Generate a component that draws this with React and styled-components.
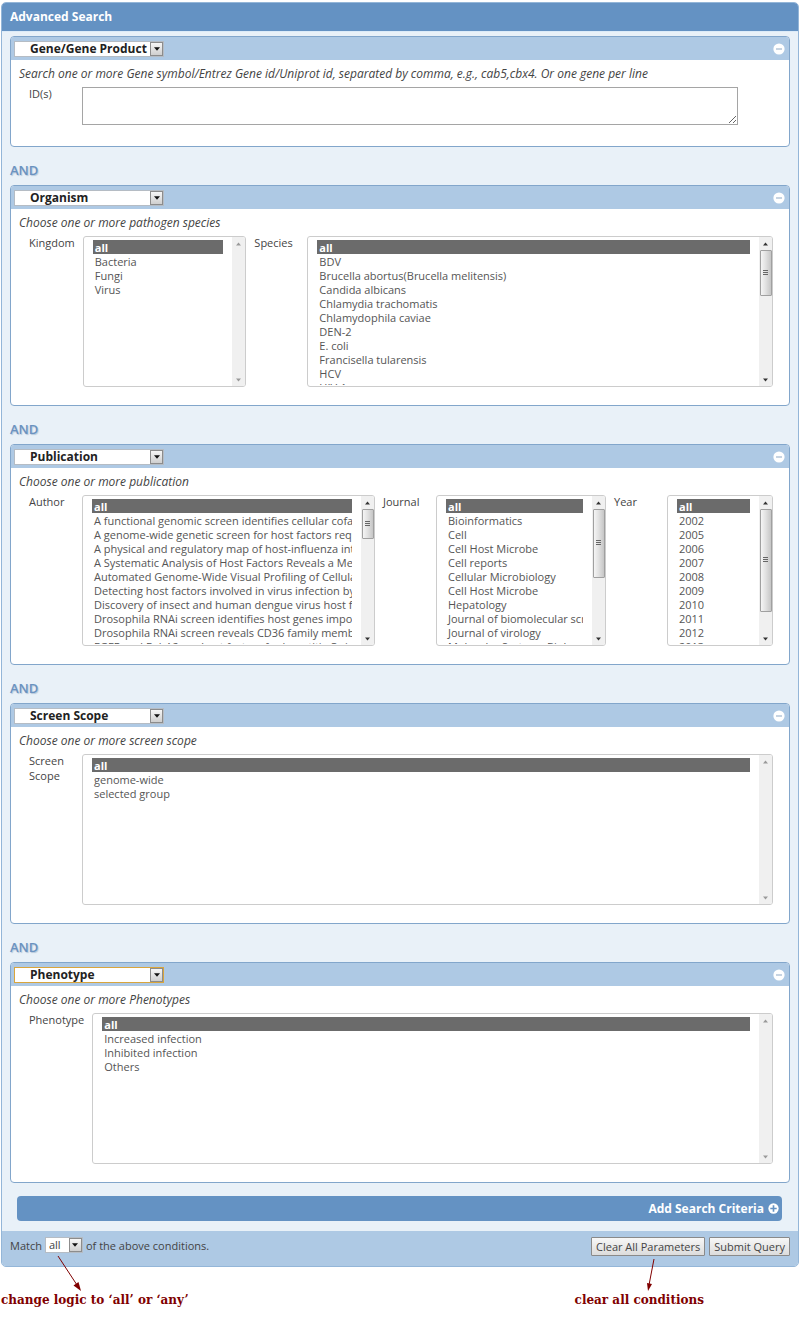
import React from 'react';
import styled, { createGlobalStyle, css } from 'styled-components';

const GlobalStyle = createGlobalStyle`
  * { box-sizing: border-box; }
  body {
    margin: 0;
    background: #fff;
    color: #444;
    font-family: "Open Sans", "Noto Sans", sans-serif;
    font-size: 11px;
    line-height: 15px;
  }
  button, select, textarea { font: inherit; color: inherit; margin: 0; }
`;

const Page = styled.main`
  padding: 2px 1px 0;
`;

const SearchForm = styled.form`
  border: 1px solid #94b6d8;
  border-radius: 5px;
  background: #e9f1f8;
  overflow: hidden;
`;

const Title = styled.h1`
  margin: 0;
  padding: 0 8px;
  font-size: 12px;
  line-height: 28px;
  color: #fff;
  background: #6492c3;
`;

const Body = styled.div`
  padding: 4px 8px 10px;
  border: solid #dcebf8;
  border-width: 1px 0 0;
`;

const Panel = styled.section`
  border: 1px solid #82a6cb;
  border-radius: 4px;
  background: #fff;
  overflow: hidden;
`;

const PanelHeader = styled.header`
  display: flex;
  align-items: center;
  justify-content: space-between;
  height: 23px;
  padding: 0 4px 0 3px;
  background: #aec9e4;
`;

const IconButton = styled.button`
  display: flex;
  padding: 0;
  border: 0;
  background: none;
`;

const SelectFrame = styled.span`
  position: relative;
  display: inline-flex;
  width: ${(p) => (p.$compact ? '38px' : '150px')};
  height: 16px;
  border: 1px solid ${(p) => (p.$active ? '#d9a53c' : '#b5bcc4')};
  background: #fff;
`;

const Dropdown = styled.select`
  appearance: none;
  width: 100%;
  padding: 0 13px 0 ${(p) => (p.$compact ? '3px' : '15px')};
  border: 0;
  outline: 0;
  background: transparent;
  line-height: 14px;
  ${(p) => !p.$compact && css`
    font-size: 12px;
    font-weight: 700;
    color: #222;
  `}
`;

const DropArrow = styled.span`
  position: absolute;
  top: 0;
  right: 0;
  bottom: 0;
  display: flex;
  align-items: center;
  justify-content: center;
  width: 13px;
  border: 1px solid #8c8c8c;
  color: #111;
  background: linear-gradient(#f6f6f6, #cfcfcf);
  pointer-events: none;
`;

const Hint = styled.p`
  margin: 0;
  padding: 6px 8px 5px;
  font-size: 12px;
  font-style: italic;
`;

const FieldGrid = styled.div`
  display: grid;
  grid-template-columns: ${(p) => p.$columns};
  padding: 0 16px 18px 18px;
`;

const FieldLabel = styled.label`
  width: min-content;
  min-width: ${(p) => (p.$inner ? '61px' : '53px')};
  padding-right: 8px;
  padding-left: ${(p) => (p.$inner ? '8px' : '0')};
`;

const GeneInput = styled.textarea`
  display: block;
  width: 95%;
  height: 38px;
  margin: 1px 0 3px;
  border: 1px solid #a5a5a5;
  background: #fff;
`;

const ListFrame = styled.div`
  display: flex;
  min-width: 0;
  height: 151px;
  margin-top: 1px;
  border: 1px solid #ccc;
  border-radius: 3px;
  background: #fff;
  overflow: hidden;
`;

const ListBox = styled.select`
  flex: 1;
  min-width: 0;
  height: 145px;
  margin: 3px 9px 0 9px;
  padding: 0;
  border: 0;
  border-radius: 0;
  outline: 0;
  color: #555;
  background: #fff;
  overflow: hidden;
  scrollbar-width: none;

  option {
    height: 14px;
    min-height: 14px;
    padding: 0 2px;
  }
  option:checked {
    color: #fff;
    -webkit-text-fill-color: #fff;
    font-weight: 700;
    background: linear-gradient(#6b6b6b, #6b6b6b);
  }
`;

const ScrollTrack = styled.div`
  display: flex;
  flex-direction: column;
  align-items: center;
  flex: none;
  width: 13px;
  background: #f0f0f0;
  color: ${(p) => (p.$idle ? '#999' : '#333')};
`;

const ScrollEnd = styled.span`
  display: flex;
  align-items: center;
  justify-content: center;
  height: 13px;
  margin-top: ${(p) => (p.$last ? 'auto' : '0')};
`;

const ScrollThumb = styled.span`
  display: flex;
  align-items: center;
  justify-content: center;
  width: 12px;
  height: ${(p) => p.$share}%;
  border: 1px solid #a0a0a0;
  border-radius: 1px;
  background: linear-gradient(90deg, #f5f5f5, #e2e2e2 45%, #c6c6c6);
`;

const Joiner = styled.div`
  padding-top: 8px;
  font-size: 13px;
  font-weight: 600;
  line-height: 30px;
  color: #6a92c0;
  text-shadow: 1px 1px 1px #b4c6da;
`;

const AddBar = styled.button`
  display: flex;
  align-items: center;
  justify-content: flex-end;
  gap: 4px;
  width: calc(100% - 15px);
  height: 25px;
  margin: 13px 8px 0 7px;
  padding: 0 3px;
  border: 0;
  border-radius: 4px;
  font-size: 12px;
  font-weight: 700;
  color: #fff;
  background: #6492c3;
`;

const Footer = styled.footer`
  display: flex;
  align-items: flex-start;
  justify-content: space-between;
  height: 35px;
  padding: 6px 8px 0;
  background: #aec9e4;
`;

const MatchRule = styled.div`
  display: flex;
  align-items: center;
  gap: 3px;
`;

const Actions = styled.div`
  display: flex;
  gap: 4px;
`;

const ActionButton = styled.button`
  height: 19px;
  padding: 0 4px;
  border: 1px solid #8a8a8a;
  border-radius: 1px;
  line-height: 17px;
  background: linear-gradient(#f7f7f7, #dcdcdc);
`;

const Notes = styled.div`
  display: flex;
  justify-content: space-between;
  padding: 24px 95px 0 0;
  font-family: "DejaVu Serif", serif;
  font-size: 12px;
  font-weight: 700;
  line-height: 18px;
  color: #800000;
`;

const Note = styled.p`
  position: relative;
  margin: 0;
`;

const NoteArrow = styled.svg`
  position: absolute;
  left: ${(p) => p.$left};
  bottom: 100%;
  overflow: visible;
`;

function RoundIcon({ plus }) {
  const size = plus ? 11 : 12;
  return (
    <svg width={size} height={size} viewBox="0 0 12 12" aria-hidden="true">
      <circle cx="6" cy="6" r="5.6" fill="#fff" />
      <path
        d={plus ? 'M2.5 6H9.5M6 2.5V9.5' : 'M3 6H9'}
        stroke={plus ? '#6492c3' : '#8fa9c6'}
        strokeWidth={plus ? 1.8 : 1.2}
      />
    </svg>
  );
}

function Triangle({ up, width = 6 }) {
  return (
    <svg width={width} height="4" viewBox="0 0 7 4" aria-hidden="true">
      <path d={up ? 'M0 4L3.5 0L7 4Z' : 'M0 0L3.5 4L7 0Z'} fill="currentColor" />
    </svg>
  );
}

function Picker({ compact, active, ...rest }) {
  return (
    <SelectFrame $compact={compact} $active={active}>
      <Dropdown $compact={compact} {...rest} />
      <DropArrow><Triangle /></DropArrow>
    </SelectFrame>
  );
}

function ListField({ id, label, inner, options, thumb }) {
  return (
    <>
      <FieldLabel htmlFor={id} $inner={inner}>{label}</FieldLabel>
      <ListFrame>
        <ListBox id={id} multiple defaultValue={['0']}>
          {['all', ...options].map((text, i) => (
            <option key={i} value={String(i)}>{text}</option>
          ))}
        </ListBox>
        <ScrollTrack $idle={!thumb} aria-hidden="true">
          <ScrollEnd><Triangle up width={5} /></ScrollEnd>
          {thumb && (
            <ScrollThumb $share={thumb}>
              <svg width="5" height="6" viewBox="0 0 5 6">
                <path d="M0 .5H5M0 2.5H5M0 4.5H5" stroke="#666" />
              </svg>
            </ScrollThumb>
          )}
          <ScrollEnd $last><Triangle width={5} /></ScrollEnd>
        </ScrollTrack>
      </ListFrame>
    </>
  );
}

const CRITERIA = ['Gene/Gene Product', 'Organism', 'Publication', 'Screen Scope', 'Phenotype'];

function Criterion({ kind, hint, active, columns = 'auto 1fr', children }) {
  return (
    <Panel>
      <PanelHeader>
        <Picker active={active} aria-label="Criterion" defaultValue={kind}>
          {CRITERIA.map((c) => <option key={c}>{c}</option>)}
        </Picker>
        <IconButton type="button" aria-label="Remove criterion"><RoundIcon /></IconButton>
      </PanelHeader>
      <Hint>{hint}</Hint>
      <FieldGrid $columns={columns}>{children}</FieldGrid>
    </Panel>
  );
}

const SPECIES = [
  'BDV', 'Brucella abortus(Brucella melitensis)', 'Candida albicans', 'Chlamydia trachomatis',
  'Chlamydophila caviae', 'DEN-2', 'E. coli', 'Francisella tularensis', 'HCV', 'HIV-1',
];

const PAPERS = [
  'A functional genomic screen identifies cellular cofactors',
  'A genome-wide genetic screen for host factors required',
  'A physical and regulatory map of host-influenza interactions',
  'A Systematic Analysis of Host Factors Reveals a Med23',
  'Automated Genome-Wide Visual Profiling of Cellular Proteins',
  'Detecting host factors involved in virus infection by',
  'Discovery of insect and human dengue virus host factors',
  'Drosophila RNAi screen identifies host genes important',
  'Drosophila RNAi screen reveals CD36 family member',
  'EGFR and EphA2 are host factors for hepatitis C virus',
];

const JOURNALS = [
  'Bioinformatics', 'Cell', 'Cell Host Microbe', 'Cell reports', 'Cellular Microbiology',
  'Cell Host Microbe', 'Hepatology', 'Journal of biomolecular screening',
  'Journal of virology', 'Molecular Systems Biology',
];

const YEARS = ['2002', '2005', '2006', '2007', '2008', '2009', '2010', '2011', '2012', '2013'];

export default function App() {
  return (
    <>
      <GlobalStyle />
      <Page>
        <SearchForm onSubmit={(e) => e.preventDefault()}>
          <Title>Advanced Search</Title>
          <Body>
            <Criterion
              kind="Gene/Gene Product"
              hint="Search one or more Gene symbol/Entrez Gene id/Uniprot id, separated by comma, e.g., cab5,cbx4. Or one gene per line"
            >
              <FieldLabel htmlFor="ids">ID(s)</FieldLabel>
              <GeneInput id="ids" />
            </Criterion>
            <Joiner>AND</Joiner>
            <Criterion
              kind="Organism"
              hint="Choose one or more pathogen species"
              columns="auto 163fr auto 464fr"
            >
              <ListField id="kingdom" label="Kingdom" options={['Bacteria', 'Fungi', 'Virus']} />
              <ListField id="species" label="Species" inner options={SPECIES} thumb={31} />
            </Criterion>
            <Joiner>AND</Joiner>
            <Criterion
              kind="Publication"
              hint="Choose one or more publication"
              columns="auto 293fr auto 170fr auto 106fr"
            >
              <ListField id="author" label="Author" options={PAPERS} thumb={20} />
              <ListField id="journal" label="Journal" inner options={JOURNALS} thumb={46} />
              <ListField id="year" label="Year" inner options={YEARS} thumb={69} />
            </Criterion>
            <Joiner>AND</Joiner>
            <Criterion kind="Screen Scope" hint="Choose one or more screen scope">
              <ListField id="scope" label="Screen Scope" options={['genome-wide', 'selected group']} />
            </Criterion>
            <Joiner>AND</Joiner>
            <Criterion kind="Phenotype" hint="Choose one or more Phenotypes" active>
              <ListField
                id="phenotype"
                label="Phenotype"
                options={['Increased infection', 'Inhibited infection', 'Others']}
              />
            </Criterion>
            <AddBar type="button">
              Add Search Criteria
              <RoundIcon plus />
            </AddBar>
          </Body>
          <Footer>
            <MatchRule>
              <label htmlFor="match">Match</label>
              <Picker compact id="match" defaultValue="all">
                <option>all</option>
                <option>any</option>
              </Picker>
              of the above conditions.
            </MatchRule>
            <Actions>
              <ActionButton type="button">Clear All Parameters</ActionButton>
              <ActionButton type="submit">Submit Query</ActionButton>
            </Actions>
          </Footer>
        </SearchForm>
        <Notes>
          <Note>
            <NoteArrow $left="57px" width="23" height="35" viewBox="0 0 23 35" aria-hidden="true">
              <path d="M0 0L19 29" stroke="#800000" />
              <path d="M23 35L15.500 29.500L20.500 26Z" fill="#800000" />
            </NoteArrow>
            change logic to ‘all’ or ‘any’
          </Note>
          <Note>
            <NoteArrow $left="72px" width="8" height="32" viewBox="0 0 8 32" aria-hidden="true">
              <path d="M7 0L2 26" stroke="#800000" />
              <path d="M1 32L0 24L5 25Z" fill="#800000" />
            </NoteArrow>
            clear all conditions
          </Note>
        </Notes>
      </Page>
    </>
  );
}
